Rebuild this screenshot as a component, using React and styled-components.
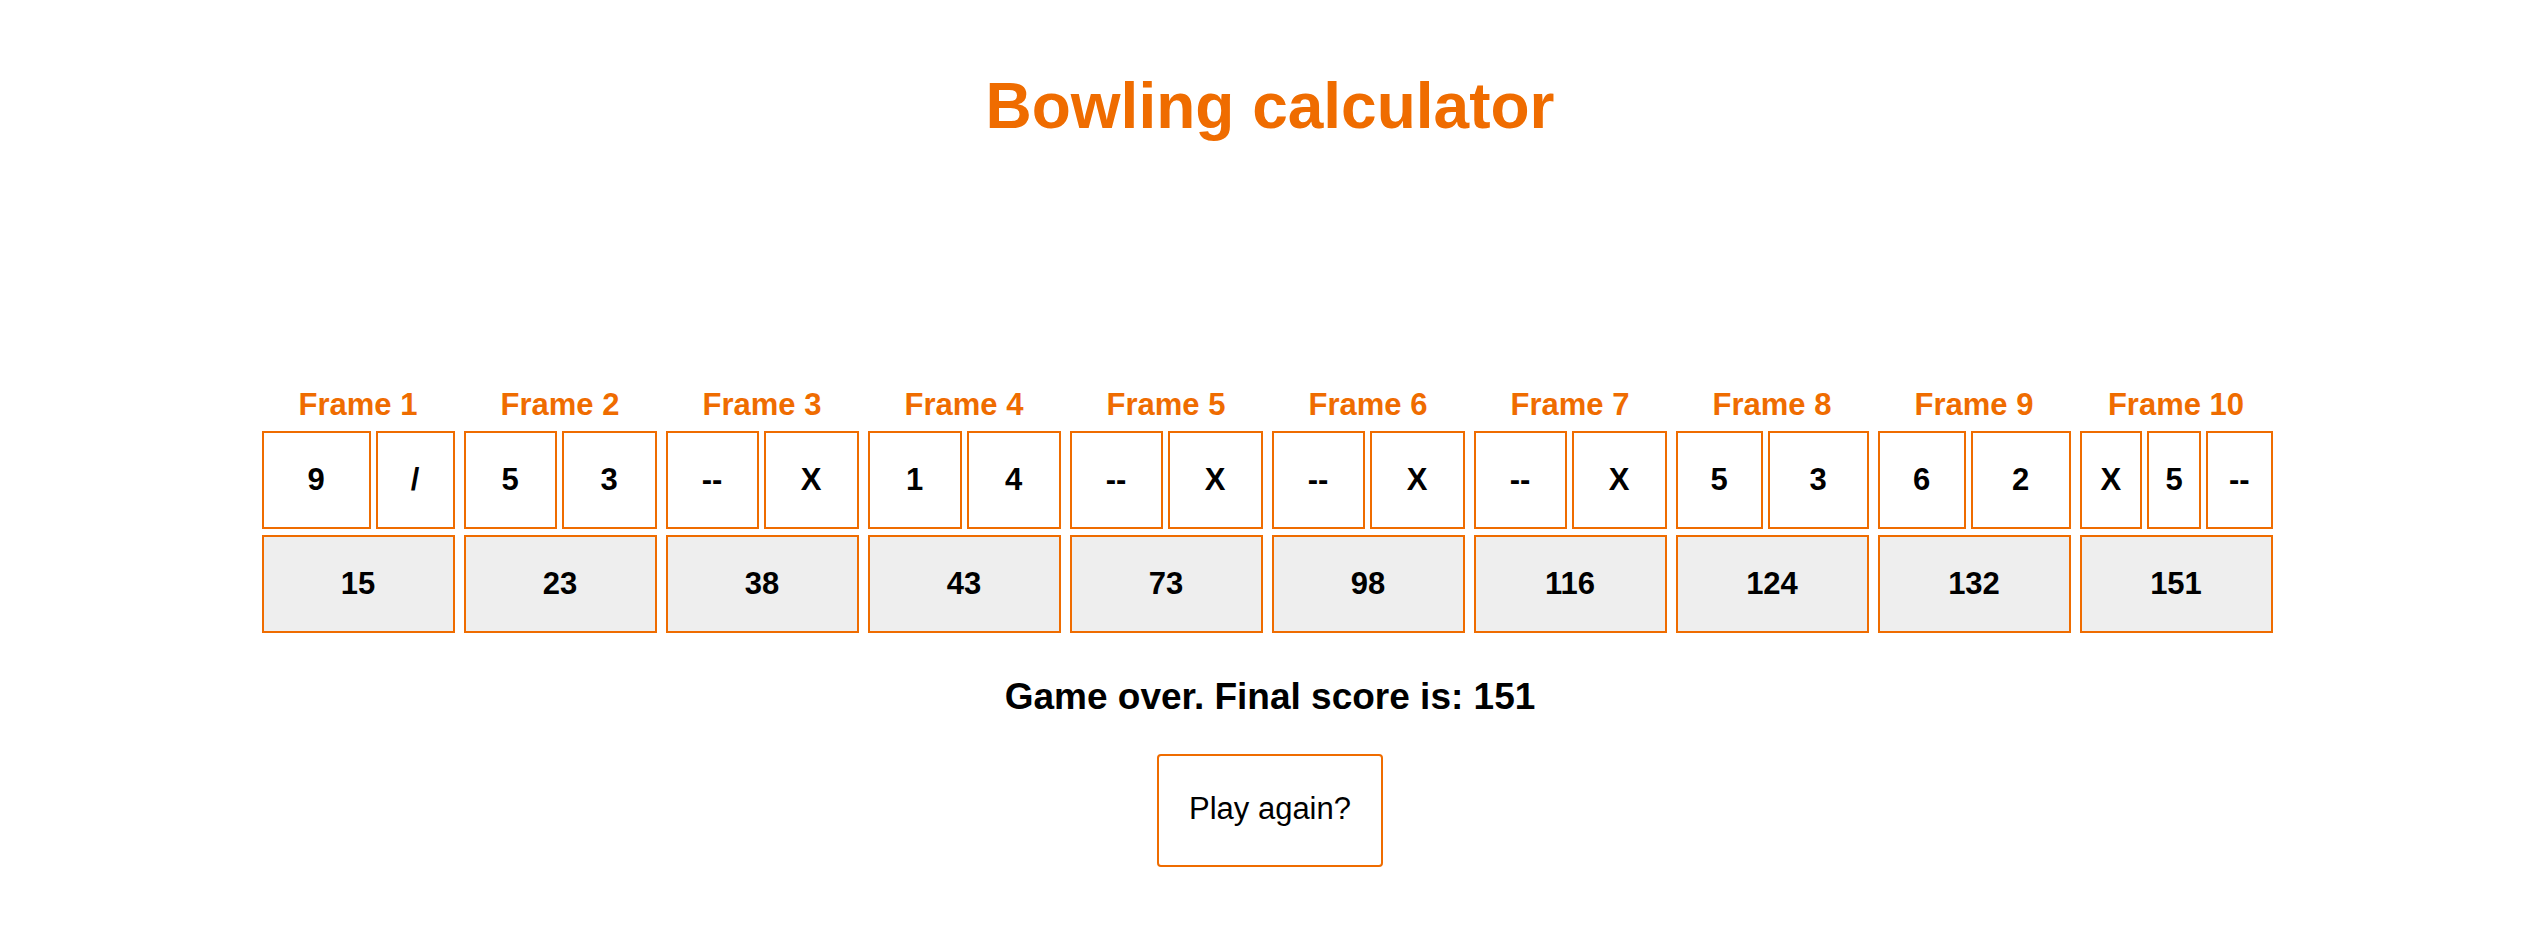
import styled, { createGlobalStyle } from 'styled-components';

const ORANGE = '#ef6c00';

const GlobalStyle = createGlobalStyle`
    body {
        margin: 0;
        background: #fff;
        font-family: "Liberation Sans", Arial, Helvetica, sans-serif;
        color: #000;
    }
`;

const Page = styled.main`
    display: flex;
    flex-direction: column;
    align-items: center;
    width: 100%;
`;

const Title = styled.h1`
    margin: 69px 0 0;
    font-size: 64px;
    line-height: 74px;
    font-weight: 700;
    color: ${ORANGE};
`;

const Board = styled.div`
    display: flex;
    gap: 9px;
    margin: 244px 6px 0 0;
`;

const Frame = styled.div`
    display: flex;
    flex-direction: column;
    width: 193px;
`;

const FrameLabel = styled.div`
    font-size: 31px;
    line-height: 36px;
    font-weight: 700;
    color: ${ORANGE};
    text-align: center;
    margin-bottom: 8px;
`;

const RollRow = styled.div`
    display: flex;
    gap: 5px;
`;

const Cell = styled.div`
    box-sizing: border-box;
    height: 98px;
    border: 2px solid ${ORANGE};
    display: flex;
    align-items: center;
    justify-content: center;
    font-size: 31px;
    font-weight: 700;
`;

const RollBox = styled(Cell)`
    flex: ${p => p.$grow} 1 0;
    min-width: 0;
`;

const ScoreBox = styled(Cell)`
    margin-top: 6px;
    background: #eeeeee;
`;

const Status = styled.h3`
    margin: 43px 0 0;
    font-size: 37px;
    line-height: 42px;
    font-weight: 700;
`;

const PlayAgain = styled.button`
    margin-top: 36px;
    padding: 35px 30px 38px;
    border: 2px solid ${ORANGE};
    border-radius: 4px;
    background: #fff;
    font-family: inherit;
    font-size: 31px;
    line-height: 36px;
    font-weight: 400;
    color: #000;
    cursor: pointer;
`;

// widths follow the uneven auto-layout of the original cells
const frames = [
  { rolls: [['9', 110], ['/', 78]], score: 15 },
  { rolls: [['5', 93], ['3', 95]], score: 23 },
  { rolls: [['--', 93], ['X', 95]], score: 38 },
  { rolls: [['1', 94], ['4', 94]], score: 43 },
  { rolls: [['--', 93], ['X', 95]], score: 73 },
  { rolls: [['--', 93], ['X', 95]], score: 98 },
  { rolls: [['--', 93], ['X', 95]], score: 116 },
  { rolls: [['5', 87], ['3', 101]], score: 124 },
  { rolls: [['6', 88], ['2', 100]], score: 132 },
  { rolls: [['X', 63], ['5', 53], ['--', 67]], score: 151 },
];

const App = () => {
  const total = frames[frames.length - 1].score;

  return (
    <Page>
      <GlobalStyle />
      <Title>Bowling calculator</Title>
      <Board>
        {frames.map((frame, i) => (
          <Frame key={i}>
            <FrameLabel>Frame {i + 1}</FrameLabel>
            <RollRow>
              {frame.rolls.map(([value, grow], j) => (
                <RollBox key={j} $grow={grow}>{value}</RollBox>
              ))}
            </RollRow>
            <ScoreBox>{frame.score}</ScoreBox>
          </Frame>
        ))}
      </Board>
      <Status>Game over. Final score is: {total}</Status>
      <PlayAgain>Play again?</PlayAgain>
    </Page>
  );
};

export default App;
